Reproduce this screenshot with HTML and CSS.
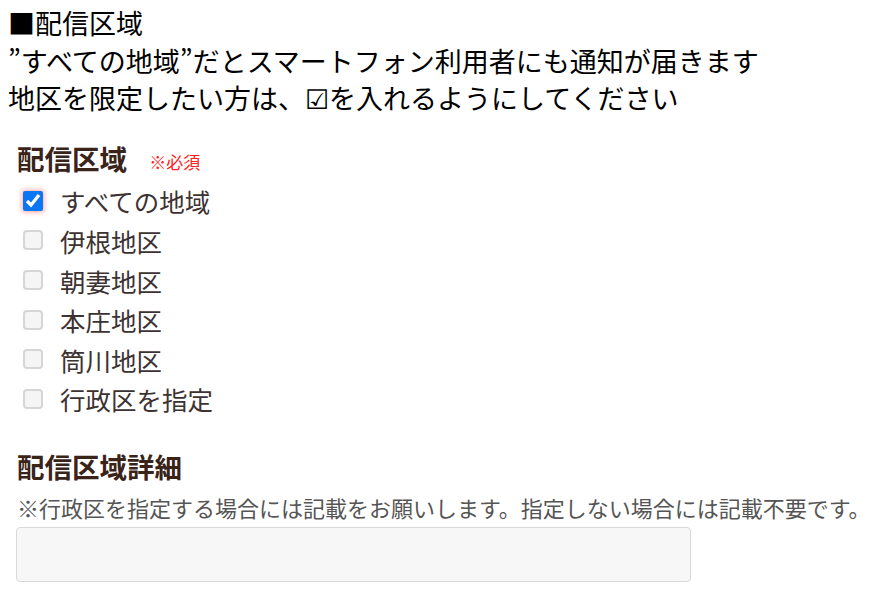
FILE: index.html
```html
<!DOCTYPE html>
<html lang="ja">
<head>
    <meta charset="UTF-8">
    <meta name="viewport" content="width=device-width, initial-scale=1.0">
    <title>配信区域</title>
    <link rel="stylesheet" href="styles.css">
</head>
<body>
    <div class="notice">
        <p>■配信区域</p>
        <p>”すべての地域”だとスマートフォン利用者にも通知が届きます</p>
        <p>地区を限定したい方は、☑を入れるようにしてください</p>
    </div>

    <div class="field">
        <h2 class="field-title">配信区域 <span class="required">※必須</span></h2>
        <ul class="check-list">
            <li><label><input type="checkbox" class="check" checked> すべての地域</label></li>
            <li><label><input type="checkbox" class="check"> 伊根地区</label></li>
            <li><label><input type="checkbox" class="check"> 朝妻地区</label></li>
            <li><label><input type="checkbox" class="check"> 本庄地区</label></li>
            <li><label><input type="checkbox" class="check"> 筒川地区</label></li>
            <li><label><input type="checkbox" class="check"> 行政区を指定</label></li>
        </ul>
    </div>

    <div class="field">
        <h2 class="field-title">配信区域詳細</h2>
        <p class="help">※行政区を指定する場合には記載をお願いします。指定しない場合には記載不要です。</p>
        <input type="text" class="text-input">
    </div>
</body>
</html>
```

FILE: styles.css
```css
body {
    margin: 0;
    padding: 4px 6px 4px 8px;
    font-family: "Noto Sans CJK JP", "Noto Sans", sans-serif;
    background: #fff;
}
.notice p {
    margin: 0;
    font-size: 27px;
    line-height: 37.5px;
    color: #000;
    white-space: nowrap;
}
.field {
    padding-left: 9px;
}
.field-title {
    margin: 0;
    font-size: 27.5px;
    font-weight: bold;
    color: #3a2419;
    line-height: 34px;
}
.notice + .field {
    margin-top: 24px;
}
.field + .field {
    margin-top: 30px;
}
.required {
    margin-left: 16px;
    font-size: 17px;
    font-weight: normal;
    color: #ff2020;
    vertical-align: middle;
}
.check-list {
    list-style: none;
    margin: 2px 0 0;
    padding: 0;
}
.check-list li {
    height: 39.6px;
    display: flex;
    align-items: center;
}
.check-list label {
    display: flex;
    align-items: center;
    gap: 17px;
    font-size: 25.5px;
    color: #3d3232;
}
.check {
    appearance: none;
    flex: none;
    width: 20px;
    height: 20px;
    margin: 0 0 0 6px;
    border: 2px solid #d6d6d6;
    border-radius: 4px;
    background: #f5f5f5;
}
.check:checked {
    appearance: auto;
    accent-color: #0a76f6;
    box-shadow: 0 0 5px 1px rgba(255, 60, 60, 0.45);
}
.help {
    margin: 9px 0 0;
    font-size: 22px;
    line-height: 30px;
    color: #555;
    white-space: nowrap;
}
.text-input {
    display: block;
    box-sizing: border-box;
    width: 675px;
    height: 55px;
    margin: 5px 0 0 -1px;
    border: 1px solid #d9d9d9;
    border-radius: 4px;
    background: #f7f7f7;
}
```
